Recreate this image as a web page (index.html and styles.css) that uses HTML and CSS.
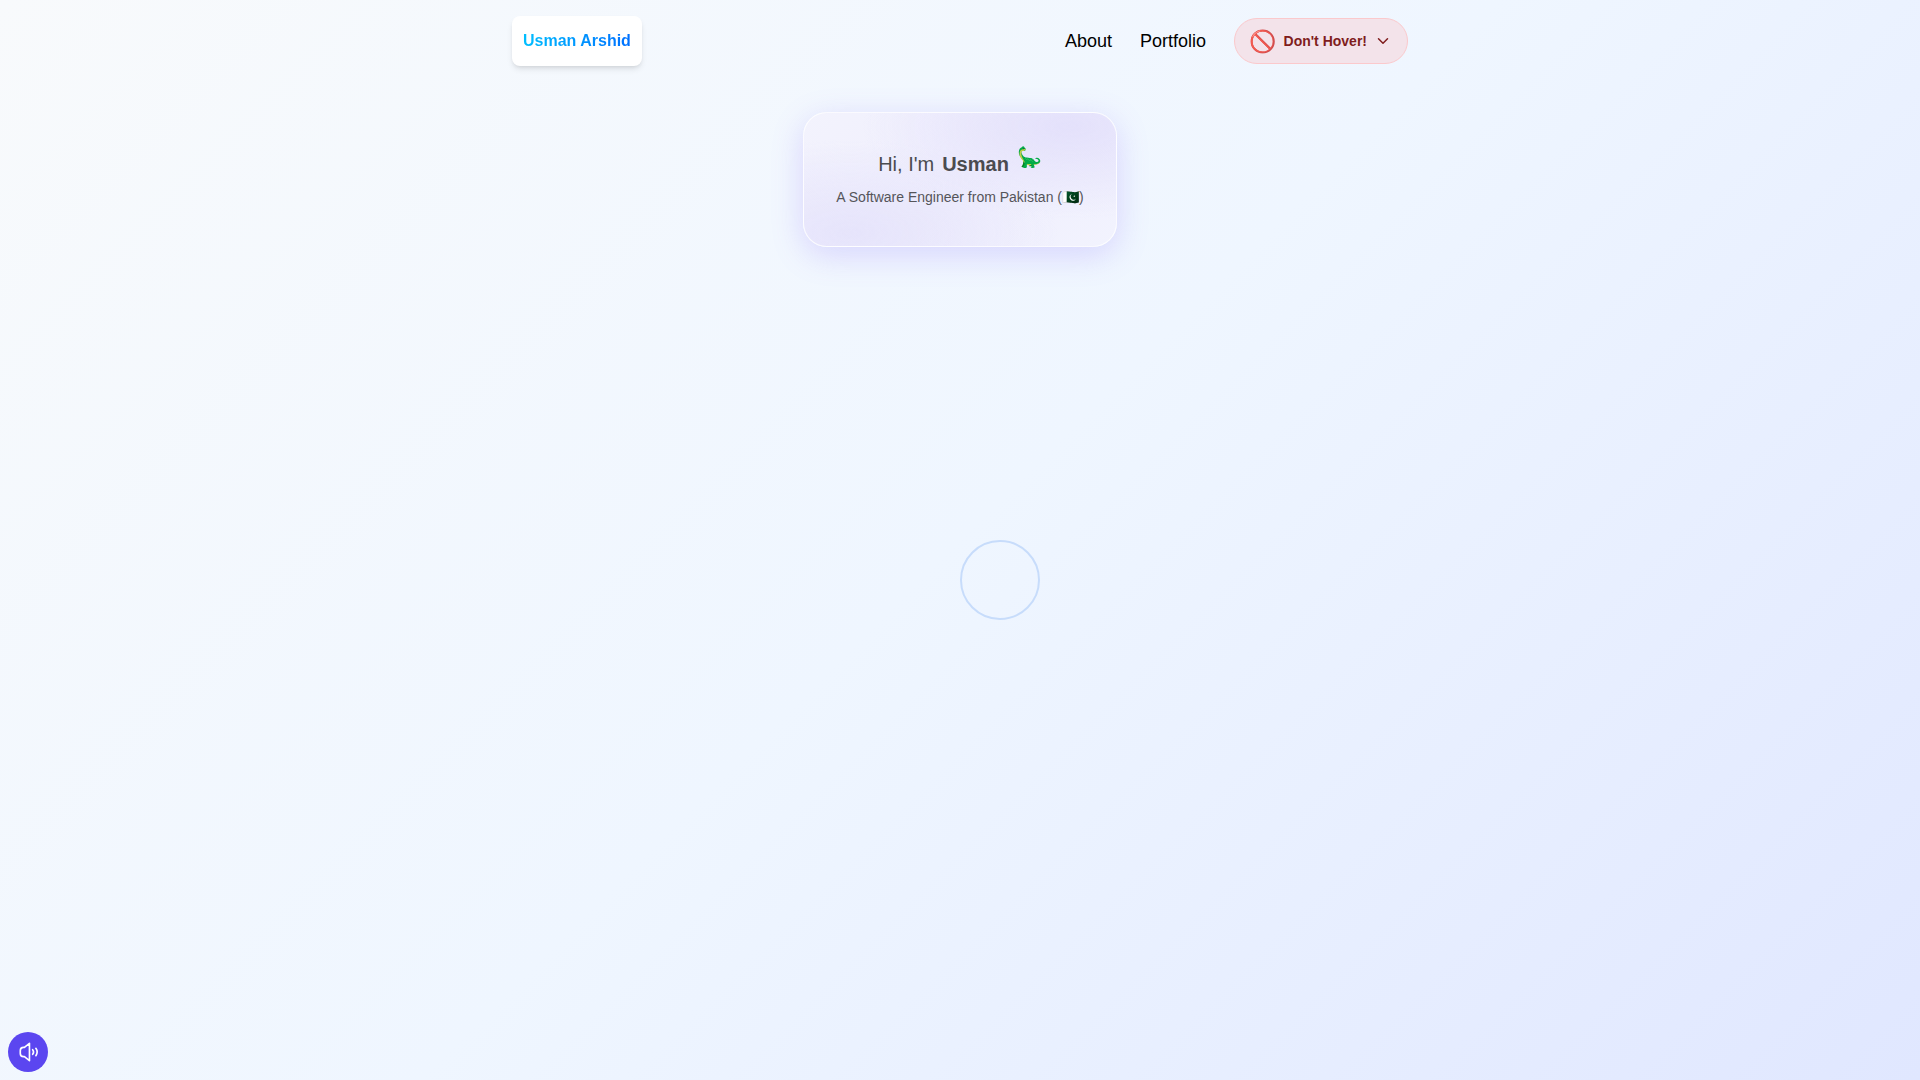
FILE: index.html
```html
<!DOCTYPE html>
<html lang="en">
<head>
    <meta charset="UTF-8">
    <meta name="viewport" content="width=device-width, initial-scale=1.0">
    <title>Usman Arshid</title>
    <link rel="stylesheet" href="styles.css">
</head>
<body>
    <header class="navbar">
        <a class="logo" href="#"><span class="logo-text">Usman Arshid</span></a>
        <nav class="nav-links">
            <a href="#">About</a>
            <a href="#">Portfolio</a>
            <button class="danger-btn">
                <span class="danger-icon">🚫</span>
                <span>Don't Hover!</span>
                <svg class="chevron" viewBox="0 0 24 24" width="18" height="18" fill="none" stroke="currentColor" stroke-width="2" stroke-linecap="round" stroke-linejoin="round"><path d="M6 9l6 6 6-6"/></svg>
            </button>
        </nav>
    </header>

    <main class="hero">
        <div class="intro-card">
            <h1 class="intro-title">
                <span>Hi, I'm</span>
                <strong>Usman</strong>
                <span class="dino">🦕</span>
            </h1>
            <p class="intro-sub">A Software Engineer from Pakistan (🇵🇰)</p>
        </div>
    </main>

    <div class="ring"></div>

    <button class="sound-btn" aria-label="Toggle sound">
        <svg viewBox="0 0 24 24" width="22" height="22" fill="none" stroke="currentColor" stroke-width="1.8" stroke-linecap="round" stroke-linejoin="round">
            <path d="M12.500 2.500v19l-5.500-4.500H6a3.500 3.500 0 0 1-3.500-3.500v-3A3.500 3.500 0 0 1 6 7h1z"/>
            <path d="M16 9.500a4 4 0 0 1 0 5"/>
            <path d="M19.500 8a7 7 0 0 1 0 8"/>
        </svg>
    </button>
</body>
</html>
```

FILE: styles.css
```css
html, body {
    height: 100%;
}

body {
    margin: 0;
    font-family: "Liberation Sans", Arial, sans-serif;
    background: linear-gradient(135deg, #f8fafc 0%, #eff6ff 50%, #e0e7ff 100%);
    overflow: hidden;
}

a {
    text-decoration: none;
}

.navbar {
    width: 896px;
    margin: 0 auto;
    padding-top: 16px;
    display: flex;
    justify-content: space-between;
    align-items: center;
}

.logo {
    display: block;
    background: #fff;
    border-radius: 8px;
    padding: 15px 11px;
    font-size: 16px;
    line-height: 20px;
    font-weight: 700;
    box-shadow: 0 4px 6px -1px rgba(0, 0, 0, 0.1), 0 2px 4px -2px rgba(0, 0, 0, 0.1);
}

.logo-text {
    background: linear-gradient(90deg, #00bfff, #0070ff);
    -webkit-background-clip: text;
    background-clip: text;
    color: transparent;
}

.nav-links {
    display: flex;
    align-items: center;
    gap: 28px;
    font-size: 18px;
}

.nav-links a {
    color: #000;
}

.danger-btn {
    display: flex;
    align-items: center;
    gap: 8px;
    height: 46px;
    padding: 0 15px 0 14px;
    border: 1px solid #fbc9cc;
    border-radius: 999px;
    background: #f3e3ea;
    color: #7f1d1d;
    font-family: inherit;
    font-size: 14px;
    font-weight: 700;
}

.danger-icon {
    font-size: 22px;
    line-height: 24px;
    margin-right: -0.5px;
    opacity: 0.85;
    transform: translateY(1px);
}

.chevron {
    margin-left: -1px;
}

.hero {
    display: flex;
    justify-content: center;
    padding-top: 46px;
}

.intro-card {
    width: 314px;
    height: 135px;
    box-sizing: border-box;
    padding-top: 37px;
    text-align: center;
    color: #4b4b4f;
    border-radius: 24px;
    border: 1px solid rgba(255, 255, 255, 0.8);
    background:
        radial-gradient(ellipse at 85% 10%, #e4e1fb, rgba(228, 225, 251, 0) 55%),
        radial-gradient(ellipse at 15% 90%, #e6e4fb, rgba(230, 228, 251, 0) 55%),
        linear-gradient(135deg, #f3f3fd 0%, #efeefd 50%, #f2f3fe 100%);
    box-shadow: 0 8px 32px rgba(124, 92, 252, 0.22);
}

.intro-title {
    margin: 0;
    display: flex;
    justify-content: center;
    align-items: center;
    gap: 8px;
    font-size: 20px;
    line-height: 28px;
    font-weight: 400;
}

.intro-title strong {
    font-weight: 700;
}

.dino {
    font-size: 20px;
    line-height: 28px;
    transform: translateY(-7px);
}

.intro-sub {
    margin: 9px 0 0;
    font-size: 14px;
    line-height: 20px;
    color: #55555a;
}

.ring {
    position: absolute;
    left: 960px;
    top: 540px;
    width: 80px;
    height: 80px;
    box-sizing: border-box;
    border: 2px solid #c7dcfb;
    border-radius: 50%;
}

.sound-btn {
    position: fixed;
    left: 8px;
    bottom: 8px;
    width: 40px;
    height: 40px;
    padding: 0 0 0 2px;
    display: flex;
    align-items: center;
    justify-content: center;
    border: none;
    border-radius: 50%;
    background: #5b46f0;
    color: #fff;
}
```
